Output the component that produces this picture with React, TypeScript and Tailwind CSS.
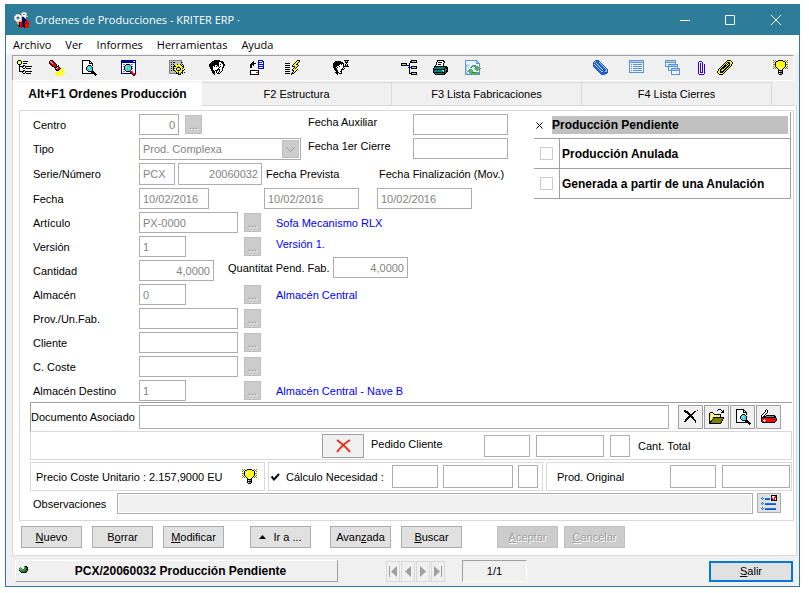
import React from 'react';

const PALETTE: Record<string, string> = {
  k: '#000000', g: '#808080', s: '#c0c0c0', w: '#ffffff', y: '#ffff00', o: '#808000',
  r: '#ff0000', d: '#a00000', b: '#0000e0', n: '#000080', c: '#00e0ff', t: '#008080',
  l: '#a8cdf0', m: '#5f92cf', q: '#1f4fb8', p: '#3000d0', e: '#5fb070', f: '#2f8a48', v: '#e8f2fc', a: '#f0b040', x: '#1a73f0',
};

function Pixels({ rows, size = 16 }: { rows: string[]; size?: number }) {
  const runs: React.ReactNode[] = [];
  rows.forEach((row, y) => {
    let x = 0;
    while (x < row.length) {
      const ch = row[x];
      let end = x + 1;
      while (end < row.length && row[end] === ch) end += 1;
      if (PALETTE[ch]) runs.push(<rect key={`${x}-${y}`} x={x} y={y} width={end - x} height={1} fill={PALETTE[ch]} />);
      x = end;
    }
  });
  return (
    <svg width={size} height={size} viewBox="0 0 16 16" shapeRendering="crispEdges" aria-hidden="true" className="block shrink-0">
      {runs}
    </svg>
  );
}

const ICONS = {
  app: [
    '........ssss....', '.......swwwws...', '..ssss.sw..ws...', '.swwwwsswwwws...', 'swwsswwssswwss..', 'sws..swsnnss....',
    'sws..swsnnns....', 'swwsswwsnnnk....', '.swwwwsannnkrr..', '..ssssaakknkrrr.', '...aakrrnnkrrrr.', '...aakrrnnkrddr.',
    '....akrrnnkrrrr.', '....kkrrnnkrrrr.', '.....krrkkkrrrr.', '......rr..krrr..',
  ],
  tree: [
    '.kkk............', 'kyyyk.kkkkk.....', 'kywyk...........', 'kyyyk.kkkk......', '.kkk............', '..k...kk........',
    '..kkkkk.kkkkkkk.', '..k..k..k.......', '..k...kk.kkkkk..', '..k.............', '..k...kk........', '..kkkkk.kkkkkkk.',
    '.....k..k.......', '......kk.kkkkk..', '................', '................',
  ],
  torch: [
    '.kkk............', 'kwrrk...........', 'krwrdk..........', 'krrwrdk.........', '.kdrrrdk........', '..kdrrrk.k......',
    '...kkdrkkk......', '.....kkkwrk.y...', '......kwrrdk.y..', '......kkrdk.yyy.', '.......kkk.yy.yy', '........y.yyyyy.',
    '......yyyyyyy.yy', '.......yy.yyyyy.', '......yyyyy.yy..', '.......y.yyy.y..',
  ],
  find: [
    '.kkkkkkkk.......', '.kwwwwwwkk......', '.kwwwwwwkwk.....', '.kwwwwwwkkkk....', '.kwwwwwwwwwk....', '.kwwwwwkkkwk....',
    '.kwwwwkcsck.....', '.kwwwkcwcsck....', '.kwwwkccwcck....', '.kwwwkscccsk....', '.kwwwwkcssck....', '.kwwwwwkkkkkk...',
    '.kwwwwwwwwkkkk..', '.kkkkkkkkkkkkkk.', '.............kkk', '..............k.',
  ],
  findWindow: [
    'nnnnnnnnnnnnnnn.', 'nnnnnnnnnnnnswn.', 'nnnnnnnnnnnnnnn.', 'nwwwwwwwwwwwwwn.', 'nwggwkkkkwggwwn.', 'nwwwkcsscrwwwwn.',
    'nwgkcwcccskgwwn.', 'nwwkswcccskwwwn.', 'nwwkcccwcskgwwn.', 'nwgkscccsckwwwn.', 'nwwwkssccrwwwwn.', 'nwggwkkkkrrgwwn.',
    'nwwwwwwwwkrrwwn.', 'nnnnnnnnnnkrrrn.', '...........krrr.', '............kk..',
  ],
  process: [
    'ggggggggggggg...', 'gsssssssssssg...', 'gskskksssssskg..', 'gsssssssssssg...', 'gskskssyksyksk..', 'gsssskyyyyyykyk.',
    'gskskkkyyoyyykk.', 'gssskyyykkkyyyk.', 'gskskkyk.sskyk..', 'gssskyyk.sskyyyk', 'gskskkyykkkyykk.', 'gssssskyyoyyyk..',
    'gsssssskykyykkyk', 'gggggggkkkyk.k..', '.........kkk....', '................',
  ],
  heads: [
    '.....kkkkkk.....', '...kkkkkkkkkkk..', '..kkkkkkkkwwkkk.', '.kkkkkkkkkwwwkk.', 'kkkkkkkkkkwkwwkk', 'kkkkkkwwkkwwwwkk',
    'kkkkwkwkwkwkwwk.', '.kkkwwwwwwkwwkk.', '.kkkwwwwwkwwwk..', '..kkwwwwkkkwwk..', '..kkkwkkk.kwwk..', '...kkkwk..kwk...',
    '...kkk.k.kwk....', '....kk..kkk.....', '.....k..........', '................',
  ],
  transfer: [
    '.........bbbbb..', '....k....bwwwbb.', '...kk....bbbbwb.', '..kkkkk..bwwwwb.', '.kkkk....bbbbbb.', '.kk.k....bwwwwb.',
    '.kk......bbbbbb.', '.kk......bwwwwb.', '.........bbbbbb.', '................', '.kkkkkkkkk......', '.kwwwwwwwk......',
    '.kwwwwwrrk......', '.kwwwwwwwk......', '.kkkkkkkkk......', '................',
  ],
  quick: [
    '............kkk.', '...........kyyk.', '..........kyyk..', 'kkkkk....kyyk...', '........kyykk...', 'kkkkk..kyyyyyk..',
    '.......kkkyyk...', 'kkkkk....kyk....', '........kyk.....', 'kkkkk..kyyyyk...', '.......kkyyk....', 'kkkkk...kyk.....',
    '.......kyk......', 'kkkkk.kkk.......', '......k.........', '................',
  ],
  wait: [
    '...........kkkkk', '..kkkkkk....kwk.', '.kkkkkkkkk..kkk.', 'kkkkkkkkkkk..k..', 'kkkkkkkwkwk.kwk.', 'kkkkkkwwwwk.kgk.',
    'kkkkwwkwwwkkkkkk', 'kkkwkwwwwwk.....', '.kkkwwwwwkwk....', '.kkkwwwwkkk.....', '..kkkwwwk.......', '...kkwwkk.......',
    '..kkkkwwk.......', '...kk.kkk.......', '....k...........', '................',
  ],
  structure: [
    '..........kkkkkk', '.........kkssssk', '.........kkkkkkk', 'kkkkkk..k.......', 'kssssk..k.......', 'kkkkkkkkk.......',
    '........k.kkkkkk', '.......bbbbssssk', '........k.kkkkkk', '........k.......', '........k.......', '........k.......',
    '........k.kkkkkk', '........kkkssssk', '..........kkkkkk', '................',
  ],
  print: [
    '....kkkkkkk.....', '....kwwwwwkk....', '...kwkkkkwwk....', '...kwwwwwwk.....', '...kwkkkwwk.....', '..kwwwwwwwk.....',
    '.kkkkkkkkkkkkk..', '.kttttttttttkkk.', 'kttttttttttktkk.', 'kkkkkkkkkkkkttk.', 'kttttttttyyktkk.', 'ktttttttttsktkk.',
    'kkkkkkkkkkkktk..', '.ktttttttttkk...', '..kkkkkkkkkk....', '................',
  ],
  refresh: [
    'mmmmmmmmmmmm....', 'mvvvvvvvvvvmm...', 'mvvvvvvvvvvmlm..', 'mvvvvvvvvvvmmmm.', 'mllvvvvvvvvvvvm.', 'mllllvveeefvvvm.',
    'mllvvveeeeeefvm.', 'mlvvvefvvvfeeem.', 'mlvvvvvvveeeeeef', 'mlvvfeevvveeeef.', 'mlveeeefvvvefvm.', 'mveeeeeevvvvvvm.',
    'mllveeeffffeeem.', 'mlllleeeeeeeefm.', 'mmmmmmfeeefmmmm.', '................',
  ],
  attach: [
    '..qqqq..........', '.qlxxqq.........', 'qlxqqxlq........', 'qxq.qqxlq.......', 'qlxq.qqxlq......', 'qqlxq.qqxlq.....',
    'qxqlxq.qqxlq....', '.qxqlxq.qqxlq...', '..qxqlxq.qqxlq..', '...qxqlxq.qqxlq.', '....qxqlxqqqxlq.', '.....qxqllxxllq.',
    '......qxqqqqqqq.', '.......qxxxxqq..', '........qqqq....', '................',
  ],
  list: [
    'mmmmmmmmmmmmmmm.', 'mllllllllllllvm.', 'mmmmmmmmmmmmmmm.', 'mvvvvvvvvvvvvvm.', 'mvmvmmmmmmmmmvm.', 'mvvvvvvvvvvvvvm.',
    'mvmvmmmmmmmmmvm.', 'mvvvvvvvvvvvvvm.', 'mvmvmmmmmmmmmvm.', 'mvvvvvvvvvvvvvm.', 'mvmvmmmmmmmmmvm.', 'mvvvvvvvvvvvvvm.',
    'mmmmmmmmmmmmmmm.', '................', '................', '................',
  ],
  cascade: [
    'mmmmmmmmmmm.....', 'mllllllllvm.....', 'mmmmmmmmmmm.....', 'mvvvvvvvvvm.....', 'mvvmmmmmmmmmm...', 'mvvmllllllllm...',
    'mmmmmmmmmmmmm...', '...mvvvvvvvvm...', '...mvvmmmmmmmmm.', '...mvvmlllllllm.', '...mmmmmmmmmmmm.', '......mvvvvvvvm.',
    '......mvvvvvvvm.', '......mvvvvvvvm.', '......mmmmmmmmm.', '................',
  ],
  clip: [
    '................', '......ppp.......', '.....p...p......', '.....p.p.p......', '.....p.p.p.p....', '.....p.p.p.p....',
    '.....p.p.p.p....', '.....p.p.p.p....', '.....p.p.p.p....', '.....p.p.p.p....', '.....p.p.p.p....', '.....p.p.p.p....',
    '.....p.ppp.p....', '.....p.....p....', '......ppppp.....', '................',
  ],
  goldClip: [
    '..........kkkk..', '.........kyyyyk.', '........kykkkyyk', '.......kyk.kkyyk', '......kyk.kykyk.', '.....kykkkykkyk.',
    '....kykkkykkyk..', '...kykkkykkyk...', '..kykkkykkyk....', '.kykkyykkyk.....', '.kykyykkyk......', 'kyykkkkyk.......',
    'kyykkkyk........', '.kyyyyk.........', '..kkkk..........', '................',
  ],
  bulb: [
    'o.o..kkkkk..o.o.', '.o.kkyyyyykk.o..', 'o.kyyyyyyyyyk.o.', '..kywyyyyyyyk...', 'ookyywyyyyyykoo.', '..kyyyyyyyyyk...',
    'o.kyyyyyyyyyk.o.', '.o.kyyywyyyk.o..', 'o.o.kyywwyk.o.o.', '.....kyyyk......', '.....kkkkk......', '.....kwggk......',
    '.....kkkkk......', '.....kwggk......', '......kkk.......', '................',
  ],
  cut: [
    '................', '.kk...........d.', '.kkkk......kk...', '..kkkk....kk....', '....kkk..kk.....', '.....kkkkk......',
    '......kkk.......', '.....kkkkk......', '....kkk.kkk.....', '...kkk...kk.....', '..kkk.....kk....', '..kk.......kk...',
    '.kk.........k...', '............k...', '................', '................',
  ],
  open: [
    '.........kkk....', '........k...k.k.', '.............kk.', '.kkk........kkk.', 'kywyk...........', 'kwywykkkkkkk....',
    'kywywywywywk....', 'kwywywywywyk....', 'kywykkkkkkkkkkk.', 'kwyykoooooooook.', 'kywkoooooooook..', 'kykooooooooook..',
    'kkkoooooooook...', 'kkooooooooook...', 'kkkkkkkkkkkk....', '................',
  ],
  knife: [
    '.....k..........', '....kwk.........', '....kwk.........', '...kwwk.........', '..kwwk..........', '.kwwk...........',
    'kwwk.kkkkkkkkk..', 'kwkkkggggggggkk.', 'kkkkkkkkkkkkkkk.', 'krrrrrrrrrrrrrrk', 'krrwrrrrrrrkkkrk', 'krwwwrrrrrrrrrrk',
    'krrwrrrrrrrrrrk.', '.kkkkkkkkkkkkk..', '................', '................',
  ],
  options: [
    '..........kkkkkk', '..........kwwwrk', '.x........kwwrrk', 'xlx.xxxxx.krwrwk', '.x..qqqqq.krrrwk', '..........kkrkkk',
    '................', '.x..............', 'xlx.xxxxxxxxxxx.', '.x..qqqqqqqqqqq.', '................', '................',
    '.x..............', 'xlx.xxxxxxxxxxx.', '.x..qqqqqqqqqqq.', '................',
  ],
  led: [
    '................', '................', '................', '........fkk.....', '....g...efkk....', '...fef..fffk....',
    '...feeffffkk....', '...keffffffk....', '....kffffkk.....', '.....kkkkkg.....', '................', '................',
    '................', '................', '................', '................',
  ],
};

type IconName = keyof typeof ICONS;

const TOOLS: { icon: IconName; label: string; gap: string }[] = [
  { icon: 'tree', label: 'Estructura', gap: 'ml-1' },
  { icon: 'torch', label: 'Buscar registro', gap: 'ml-4' },
  { icon: 'find', label: 'Vista previa', gap: 'ml-4' },
  { icon: 'findWindow', label: 'Consultar', gap: 'ml-6' },
  { icon: 'process', label: 'Procesos', gap: 'ml-8' },
  { icon: 'heads', label: 'Usuarios', gap: 'ml-6' },
  { icon: 'transfer', label: 'Traspasar', gap: 'ml-6' },
  { icon: 'quick', label: 'Acciones', gap: 'ml-5' },
  { icon: 'wait', label: 'Pendientes', gap: 'ml-8' },
  { icon: 'structure', label: 'Niveles', gap: 'ml-[52px]' },
  { icon: 'print', label: 'Imprimir', gap: 'ml-4' },
  { icon: 'refresh', label: 'Actualizar', gap: 'ml-4' },
  { icon: 'attach', label: 'Adjuntar', gap: 'ml-auto' },
  { icon: 'list', label: 'Lista', gap: 'ml-5' },
  { icon: 'cascade', label: 'Ventanas', gap: 'ml-5' },
  { icon: 'clip', label: 'Documentos', gap: 'ml-3' },
  { icon: 'goldClip', label: 'Enlaces', gap: 'ml-2' },
  { icon: 'bulb', label: 'Sugerencias', gap: 'ml-10' },
];

function Field({ id, label, value = '', className = '' }: { id?: string; label?: string; value?: string; className?: string }) {
  return (
    <input
      id={id}
      aria-label={label}
      defaultValue={value}
      className={`border border-[#abadb3] bg-white px-[3px] text-[#838383] outline-none ${className}`}
    />
  );
}

function More({ className = '' }: { className?: string }) {
  return (
    <button
      disabled
      aria-label="Más"
      className={`flex h-[19px] w-[17px] shrink-0 items-center justify-center border border-[#bfbfbf] bg-[#cccccc] text-[#838383] [text-shadow:1px_1px_white] ${className}`}
    >
      ...
    </button>
  );
}

function Row({ id, label, tall, children }: { id: string; label: string; tall?: boolean; children: React.ReactNode }) {
  return (
    <div className={`flex items-center ${tall ? 'h-[22px]' : 'h-[21px]'}`}>
      <label htmlFor={id} className="w-[106px] shrink-0">{label}</label>
      {children}
    </div>
  );
}

function State({ label, checked }: { label: string; checked?: boolean }) {
  if (checked) {
    return (
      <label className="flex h-[27px] items-center border-r border-b border-[#a0a0a0] pr-[2px]">
        <span className="relative flex w-[18px] shrink-0 items-center">
          <input type="checkbox" defaultChecked className="ml-[1px] size-2 appearance-none" />
          <svg width="7" height="7" viewBox="0 0 7 7" className="absolute left-[2px]" aria-hidden="true">
            <path d="M.5.5l6 6M6.5.5l-6 6" stroke="#000" />
          </svg>
        </span>
        <span className="h-[18px] flex-1 bg-[#c0c0c0] leading-[18px]">{label}</span>
      </label>
    );
  }
  return (
    <label className="flex h-[30px] items-center border-r border-b border-[#a0a0a0]">
      <span className="flex h-full w-[26px] shrink-0 items-center border-r border-[#a0a0a0]">
        <input type="checkbox" className="ml-[6px] size-[13px] appearance-none border border-[#cccccc] bg-white" />
      </span>
      <span className="ml-[2px]">{label}</span>
    </label>
  );
}

const BTN = 'flex h-[22px] w-[61px] shrink-0 items-center justify-center border border-[#adadad] bg-[#e1e1e1] whitespace-nowrap';
const BTN_OFF = 'flex h-[22px] w-[61px] shrink-0 items-center justify-center border border-[#bfbfbf] bg-[#cccccc] whitespace-nowrap text-[#a0a0a0] [text-shadow:1px_1px_white]';
const ICON_BTN = 'flex h-6 w-[25px] shrink-0 items-center justify-center border border-[#a0a0a0] bg-[#f0f0f0]';
const NAV = 'flex h-[21px] w-[14px] items-center justify-center border border-[#d9d9d9] bg-[#f0f0f0]';

function NavArrow({ points, bar }: { points: string; bar?: number }) {
  return (
    <svg width="10" height="13" viewBox="0 0 10 13" className="shrink-0" aria-hidden="true">
      <polygon points={points} fill="#a0a0a0" />
      {bar !== undefined && <rect x={bar} y="1" width="1" height="11" fill="#a0a0a0" />}
    </svg>
  );
}

export default function App() {
  return (
    <div className="min-w-[800px] bg-white pt-1 pr-[9px] pb-1 pl-[5px] font-['Liberation_Sans',Arial,sans-serif] text-[11px] leading-4 whitespace-nowrap text-black">
      <main className="border border-t-0 border-[#2d7d9a] bg-[#f0f0f0]">
        <header className="flex h-[31px] items-center bg-[#2d7d9a] pl-[8px] font-['Open_Sans',sans-serif] text-white">
          <Pixels rows={ICONS.app} />
          <h1 className="ml-[5px] flex-1">Ordenes de Producciones - KRITER ERP ·</h1>
          <button aria-label="Minimizar" className="flex h-full w-[45px] items-center justify-center">
            <svg width="10" height="10" viewBox="0 0 10 10"><path d="M0 5.5h10" stroke="#fff" /></svg>
          </button>
          <button aria-label="Maximizar" className="flex h-full w-[46px] items-center justify-center">
            <svg width="10" height="10" viewBox="0 0 10 10"><path d="M.5.5h9v9h-9z" stroke="#fff" fill="none" /></svg>
          </button>
          <button aria-label="Cerrar" className="flex h-full w-[46px] items-center justify-center">
            <svg width="10" height="10" viewBox="0 0 10 10"><path d="M0 0l10 10M10 0L0 10" stroke="#fff" /></svg>
          </button>
        </header>

        <nav className="flex h-[19px] items-center gap-[14px] bg-white pl-[7px] font-['Open_Sans',sans-serif]">
          {['Archivo', 'Ver', 'Informes', 'Herramientas', 'Ayuda'].map((item) => (
            <button key={item}>{item}</button>
          ))}
        </nav>

        <div role="toolbar" className="mt-px mr-[5px] ml-[6px] flex h-[26px] items-center border border-t-[#a0a0a0] border-r-white border-b-white border-l-[#a0a0a0] pr-1">
          {TOOLS.map((tool) => (
            <button key={tool.label} aria-label={tool.label} className={tool.gap}>
              <Pixels rows={ICONS[tool.icon]} />
            </button>
          ))}
        </div>

        <div className="mr-[2px] ml-[6px]">
          <div role="tablist" className="mt-px mr-[25px] flex h-[23px]">
            <button role="tab" aria-selected="true" className="relative -mb-px flex-1 border-l border-[#d9d9d9] bg-white text-[12px] font-bold">
              Alt+F1 Ordenes Producción
            </button>
            {['F2 Estructura', 'F3 Lista Fabricaciones', 'F4 Lista Cierres'].map((tab) => (
              <button key={tab} role="tab" className="flex-1 border-t border-r border-[#d9d9d9]">{tab}</button>
            ))}
          </div>

          <section className="border border-[#d9d9d9] bg-white pt-1">
            <div className="mr-[2px] ml-[6px] border border-[#d9d9d9] pb-[6px]">
              <div className="flex pt-[3px] pr-[2px] pl-[13px]">
                <form className="flex w-[501px] shrink-0 flex-col gap-[3px]">
                  <Row id="centro" label="Centro">
                    <Field id="centro" value="0" className="h-[21px] w-[40px] text-right" />
                    <More className="ml-[6px]" />
                    <label htmlFor="aux" className="ml-[106px] w-[105px] self-start">Fecha Auxiliar</label>
                    <Field id="aux" className="h-[21px] w-[95px]" />
                  </Row>
                  <Row id="tipo" label="Tipo" tall>
                    <span className="relative flex">
                      <select id="tipo" disabled className="h-[22px] w-[162px] appearance-none border border-[#abadb3] bg-white px-[3px] text-[#838383] opacity-100">
                        <option>Prod. Complexa</option>
                      </select>
                      <span className="pointer-events-none absolute top-[2px] right-[2px] flex h-[18px] w-[17px] items-center justify-center border border-[#bfbfbf] bg-[#cccccc]">
                        <svg width="9" height="5" viewBox="0 0 9 5" aria-hidden="true"><path d="M.5.5l4 4 4-4" fill="none" stroke="#999" /></svg>
                      </span>
                    </span>
                    <label htmlFor="cierre" className="ml-[7px] w-[105px] self-start">Fecha 1er Cierre</label>
                    <Field id="cierre" className="h-[21px] w-[95px] self-start" />
                  </Row>
                  <Row id="serie" label="Serie/Número" tall>
                    <Field id="serie" value="PCX" className="h-[22px] w-[36px]" />
                    <Field label="Número" value="20060032" className="ml-[3px] h-[22px] w-[84px] text-right" />
                    <label htmlFor="prevista" className="ml-1 w-[113px]">Fecha Prevista</label>
                    <label htmlFor="fin">Fecha Finalización (Mov.)</label>
                  </Row>
                  <Row id="fecha" label="Fecha">
                    <Field id="fecha" value="10/02/2016" className="h-[21px] w-[70px]" />
                    <Field id="prevista" value="10/02/2016" className="ml-[55px] h-[21px] w-[95px]" />
                    <Field id="fin" value="10/02/2016" className="ml-[18px] h-[21px] w-[95px]" />
                  </Row>
                  <Row id="articulo" label="Artículo">
                    <Field id="articulo" value="PX-0000" className="h-[21px] w-[99px]" />
                    <More className="ml-[6px]" />
                    <output className="ml-[15px] text-[#0000ff]">Sofa Mecanismo RLX</output>
                  </Row>
                  <Row id="version" label="Versión">
                    <Field id="version" value="1" className="h-[21px] w-[47px]" />
                    <More className="ml-[58px]" />
                    <output className="ml-[15px] self-start text-[#0000ff]">Versión 1.</output>
                  </Row>
                  <Row id="cantidad" label="Cantidad">
                    <Field id="cantidad" value="4,0000" className="h-[21px] w-[75px] text-right" />
                    <label htmlFor="pend" className="ml-[14px] w-[105px] self-start">Quantitat Pend. Fab.</label>
                    <Field id="pend" value="4,0000" className="-mt-[6px] h-[21px] w-[75px] text-right" />
                  </Row>
                  <Row id="almacen" label="Almacén">
                    <Field id="almacen" value="0" className="h-[21px] w-[47px]" />
                    <More className="ml-[58px]" />
                    <output className="ml-[15px] text-[#0000ff]">Almacén Central</output>
                  </Row>
                  <Row id="prov" label="Prov./Un.Fab.">
                    <Field id="prov" className="h-[21px] w-[99px]" />
                    <More className="ml-[6px]" />
                  </Row>
                  <Row id="cliente" label="Cliente">
                    <Field id="cliente" className="h-[21px] w-[99px]" />
                    <More className="ml-[6px]" />
                  </Row>
                  <Row id="coste" label="C. Coste">
                    <Field id="coste" className="h-[21px] w-[99px]" />
                    <More className="ml-[6px]" />
                  </Row>
                  <Row id="destino" label="Almacén Destino">
                    <Field id="destino" value="1" className="h-[21px] w-[47px]" />
                    <More className="ml-[58px]" />
                    <output className="ml-[15px] text-[#0000ff]">Almacén Central - Nave B</output>
                  </Row>
                </form>
                <fieldset className="-mt-[2px] min-w-0 flex-1 text-[12px] font-bold">
                  <State label="Producción Pendiente" checked />
                  <State label="Producción Anulada" />
                  <State label="Generada a partir de una Anulación" />
                </fieldset>
              </div>

              <div className="mt-px mr-px ml-[10px] flex h-[29px] items-center border-t border-l border-[#a0a0a0] pr-[11px]">
                <label htmlFor="doc" className="w-[108px] shrink-0">Documento Asociado</label>
                <Field id="doc" className="mr-[9px] h-6 min-w-0 flex-1" />
                <div className="flex gap-px">
                  <button aria-label="Quitar documento" className={ICON_BTN}><Pixels rows={ICONS.cut} /></button>
                  <button aria-label="Abrir documento" className={ICON_BTN}><Pixels rows={ICONS.open} /></button>
                  <button aria-label="Ver documento" className={ICON_BTN}><Pixels rows={ICONS.find} /></button>
                  <button aria-label="Herramientas" className={ICON_BTN}><Pixels rows={ICONS.knife} /></button>
                </div>
              </div>

              <div className="mr-px ml-[10px] flex h-[29px] items-center border border-[#d9d9d9] pl-[291px]">
                <button aria-label="Borrar pedido" className="flex h-6 w-[42px] items-center justify-center border border-[#a0a0a0] bg-[#f0f0f0]">
                  <svg width="15" height="14" viewBox="0 0 15 14" aria-hidden="true">
                    <path d="M1 1c4 3 9 7 13 12M14 1C9 4 4 9 1 13" fill="none" stroke="#e8301c" strokeWidth="2" />
                  </svg>
                </button>
                <label htmlFor="pedido" className="ml-[7px] w-[113px] self-start pt-[4px]">Pedido Cliente</label>
                <Field id="pedido" className="h-[22px] w-[46px]" />
                <Field label="Número de pedido" className="ml-[6px] h-[22px] w-[68px]" />
                <Field id="total" className="ml-[6px] h-[22px] w-[20px]" />
                <label htmlFor="total" className="ml-2">Cant. Total</label>
              </div>

              <div className="mt-[2px] mr-px ml-[10px] flex h-[29px] gap-[3px]">
                <div className="flex w-[235px] shrink-0 items-center justify-between border border-[#d9d9d9] pr-[6px] pl-[5px]">
                  <span>Precio Coste Unitario : 2.157,9000 EU</span>
                  <Pixels rows={ICONS.bulb} />
                </div>
                <div className="flex w-[275px] shrink-0 items-center border border-[#d9d9d9]">
                  <label className="flex w-[123px] items-center">
                    <span className="relative flex w-[17px] items-center">
                      <input type="checkbox" defaultChecked className="ml-[2px] size-2 appearance-none" />
                      <svg width="9" height="8" viewBox="0 0 9 8" className="absolute left-[2px]" aria-hidden="true">
                        <path d="M.5 3.5l2.500 3L8 1" fill="none" stroke="#000" strokeWidth="2" />
                      </svg>
                    </span>
                    Cálculo Necesidad :
                  </label>
                  <Field label="Serie necesidad" className="h-[23px] w-[46px]" />
                  <Field label="Número necesidad" className="ml-[5px] h-[23px] w-[70px]" />
                  <Field label="Línea necesidad" className="ml-[5px] h-[23px] w-[20px]" />
                </div>
                <div className="flex min-w-0 flex-1 items-center justify-end border border-[#d9d9d9] pr-px pl-[10px]">
                  <label htmlFor="original" className="flex-1">Prod. Original</label>
                  <Field id="original" className="h-[23px] w-[46px]" />
                  <Field label="Número original" className="ml-[6px] h-[23px] w-[68px]" />
                </div>
              </div>

              <div className="mt-[2px] flex items-center pr-[12px] pl-[13px]">
                <label htmlFor="obs" className="w-[84px]">Observaciones</label>
                <input id="obs" className="h-[21px] min-w-0 flex-1 border border-[#abadb3] bg-[#f0f0f0] shadow-[inset_0_0_0_1px_white]" />
                <button aria-label="Opciones" className="ml-1 flex h-[20px] w-[24px] items-center justify-center self-start border border-[#adadad] bg-[#e1e1e1]">
                  <Pixels rows={ICONS.options} />
                </button>
              </div>
            </div>

            <div className="mt-[5px] flex pb-[7px] pl-2">
              <button className={BTN}><span><u>N</u>uevo</span></button>
              <button className={`ml-[10px] ${BTN}`}><span>B<u>o</u>rrar</span></button>
              <button className={`ml-[10px] ${BTN}`}><span><u>M</u>odificar</span></button>
              <button className={`ml-[26px] gap-[7px] ${BTN}`}>
                <svg width="7" height="4" viewBox="0 0 7 4" aria-hidden="true"><path d="M0 4l3.500-4L7 4z" /></svg>
                <span>Ir a ...</span>
              </button>
              <button className={`ml-[19px] ${BTN}`}><span>Avan<u>z</u>ada</span></button>
              <button className={`ml-[10px] ${BTN}`}><span><u>B</u>uscar</span></button>
              <button disabled className={`ml-[35px] ${BTN_OFF}`}><span><u>A</u>ceptar</span></button>
              <button disabled className={`ml-[6px] ${BTN_OFF}`}><span><u>C</u>ancelar</span></button>
            </div>
          </section>
        </div>

        <footer className="flex h-[30px] items-center pr-[6px] pl-[9px]">
          <div className="flex h-[22px] w-[323px] items-center border border-t-white border-r-[#a0a0a0] border-b-[#a0a0a0] border-l-white text-[12px] font-bold">
            <Pixels rows={ICONS.led} />
            <span className="flex-1 pr-[8px] text-center">PCX/20060032 Producción Pendiente</span>
          </div>
          <div className="ml-12 flex gap-px">
            <button aria-label="Primero" className={NAV}><NavArrow points="9,1 9,12 3,6.5" bar={1} /></button>
            <button aria-label="Anterior" className={NAV}><NavArrow points="8,1 8,12 2,6.5" /></button>
            <button aria-label="Siguiente" className={NAV}><NavArrow points="2,1 2,12 8,6.5" /></button>
            <button aria-label="Último" className={NAV}><NavArrow points="1,1 1,12 7,6.5" bar={8} /></button>
          </div>
          <div className="ml-[17px] flex h-[22px] w-[65px] items-center justify-center border border-t-[#a0a0a0] border-r-white border-b-white border-l-[#a0a0a0]">1/1</div>
          <button className="ml-auto flex h-[21px] w-[84px] items-center justify-center border-2 border-[#0078d7] bg-[#e1e1e1]"><span><u>S</u>alir</span></button>
        </footer>
      </main>
    </div>
  );
}
